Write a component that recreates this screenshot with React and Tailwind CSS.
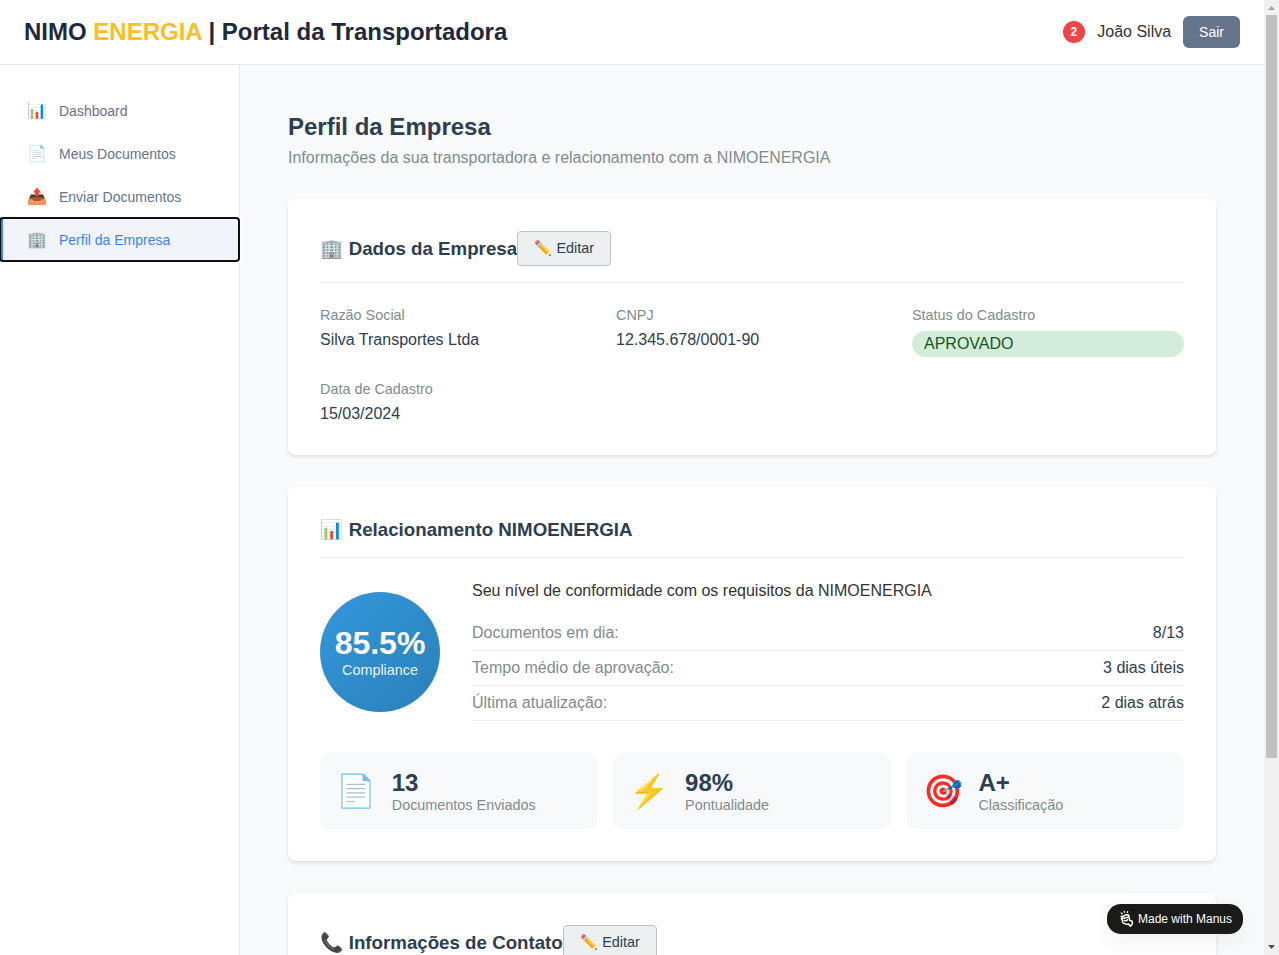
import React from "react";

const navItems = [
  { icon: "📊", label: "Dashboard" },
  { icon: "📄", label: "Meus Documentos" },
  { icon: "📤", label: "Enviar Documentos" },
  { icon: "🏢", label: "Perfil da Empresa", active: true },
];

const complianceRows = [
  ["Documentos em dia:", "8/13"],
  ["Tempo médio de aprovação:", "3 dias úteis"],
  ["Última atualização:", "2 dias atrás"],
];

const stats = [
  { icon: "📄", value: "13", label: "Documentos Enviados" },
  { icon: "⚡", value: "98%", label: "Pontualidade" },
  { icon: "🎯", value: "A+", label: "Classificação" },
];

function Header() {
  return (
    <header className="flex h-[65px] shrink-0 items-center justify-between border-b border-[#e2e8f0] bg-white px-6">
      <h1 className="text-2xl leading-7 font-bold text-[#1e293b]">
        NIMO <span className="text-[#fbbf24]">ENERGIA</span> | Portal da Transportadora
      </h1>
      <div className="flex items-center gap-3">
        <span className="flex h-[22px] w-[22px] items-center justify-center rounded-full bg-[#ef4444] pr-px text-xs font-bold text-white">
          2
        </span>
        <span>João Silva</span>
        <button className="h-8 rounded-md bg-[#64748b] px-4 text-sm text-white">Sair</button>
      </div>
    </header>
  );
}

function Sidebar() {
  return (
    <aside className="w-60 shrink-0 border-r border-[#e2e8f0] bg-white pt-6">
      <nav className="flex flex-col">
        {navItems.map((item) => (
          <button
            key={item.label}
            className={
              item.active
                ? "flex h-[43px] items-center gap-3 border-l-[3px] border-[#3b82f6] bg-[#f1f5f9] px-6 text-sm text-[#3b82f6] [outline:auto_1px_#101010]"
                : "flex h-[43px] items-center gap-3 border-l-[3px] border-transparent px-6 text-sm text-[#64748b]"
            }
          >
            <span className="w-5 text-center text-base leading-[normal]">{item.icon}</span>
            <span>{item.label}</span>
          </button>
        ))}
      </nav>
    </aside>
  );
}

function Card({ icon, title, editable, children }) {
  return (
    <section className="shrink-0 rounded-lg bg-white p-8 shadow-[0_2px_4px_rgba(0,0,0,0.1)]">
      <div className="mb-6 flex items-center border-b border-[#ecf0f1] pb-4">
        <h3 className="text-[18.72px] leading-[22px] font-bold text-[#2c3e50]">
          <span className="mr-[0.5px]">{icon}</span> {title}
        </h3>
        {editable && (
          <button className="h-[35px] rounded border border-[#bdc3c7] bg-[#ecf0f1] px-4 text-[14.4px] leading-[17px] text-[#2c3e50]">
            <span className="mr-[0.4px]">✏️</span> Editar
          </button>
        )}
      </div>
      {children}
    </section>
  );
}

function Field({ label, children }) {
  return (
    <div className="flex flex-col gap-2">
      <span className="text-[14.4px] leading-4 text-[#7f8c8d]">{label}</span>
      {children}
    </div>
  );
}

function Scrollbar() {
  return (
    <div className="flex w-[15px] shrink-0 flex-col items-center justify-between bg-[#f1f1f1]">
      <div className="flex flex-col items-center">
        <svg className="h-[15px] w-[15px]" viewBox="0 0 15 15">
          <path d="M4 10 L7.5 6 L11 10 Z" fill="#a3a3a3" />
        </svg>
        <div className="h-[743px] w-[11px] bg-[#c1c1c1]" />
      </div>
      <svg className="h-[15px] w-[15px]" viewBox="0 0 15 15">
        <path d="M4 5 L11 5 L7.5 9 Z" fill="#505050" />
      </svg>
    </div>
  );
}

function ManusBadge() {
  return (
    <div className="absolute top-[904px] left-[1107px] flex h-[30px] w-[136px] items-center gap-1 rounded-[14px] bg-[#1a1a19] pl-3 text-xs text-white shadow-[0_8px_24px_rgba(0,0,0,0.06)]">
      <svg className="h-[18px] w-[15px] shrink-0" viewBox="0 0 15 18" fill="none" stroke="white" strokeLinecap="round" strokeLinejoin="round">
        <path d="M2.2 2.9 L3.2 3.8 M5.3 1.3 L5.5 2.3 M8.7 1.5 L8.3 2.4" strokeWidth="1.2" />
        <path d="M2.2 6.4 L5 5.9 Q7 4.4 9.2 5 Q10.4 5.6 9.6 7 Q10.9 8.4 10.6 10.4 L13.2 11.2 L13.4 14 L11.4 16.2 L9.6 14 Q6.4 14.6 4.5 13.2 Q3 12 3.5 10.2 L2.3 8.6 L3.8 8 Z" strokeWidth="1.5" />
        <path d="M4.4 8.3 L8.6 7.2 M5.3 10.4 Q7.4 11.8 8.6 9.4" strokeWidth="1.4" />
      </svg>
      <span>Made with Manus</span>
    </div>
  );
}

export default function App() {
  return (
    <div className="relative flex h-[955px] w-[1279px] overflow-hidden bg-[#f8fafc] font-['Liberation_Sans',Arial,sans-serif] text-base leading-[18px] text-[#333]">
      <div className="flex min-w-0 flex-1 flex-col">
        <Header />
        <div className="flex min-h-0 flex-1">
          <Sidebar />
          <main className="flex min-w-0 flex-1 flex-col gap-8 overflow-hidden p-12">
            <div className="flex shrink-0 flex-col gap-2">
              <h2 className="text-2xl leading-7 font-bold text-[#2c3e50]">Perfil da Empresa</h2>
              <p className="text-[#7f8c8d]">
                Informações da sua transportadora e relacionamento com a NIMOENERGIA
              </p>
            </div>

            <Card icon="🏢" title="Dados da Empresa" editable>
              <div className="grid grid-cols-3 gap-6 text-[#2c3e50]">
                <Field label="Razão Social">
                  <span>Silva Transportes Ltda</span>
                </Field>
                <Field label="CNPJ">
                  <span>12.345.678/0001-90</span>
                </Field>
                <Field label="Status do Cadastro">
                  <span className="rounded-[20px] bg-[#d4edda] px-3 py-1 text-[#155724]">APROVADO</span>
                </Field>
                <Field label="Data de Cadastro">
                  <span>15/03/2024</span>
                </Field>
              </div>
            </Card>

            <Card icon="📊" title="Relacionamento NIMOENERGIA">
              <div className="mb-8 flex items-center gap-8">
                <div className="flex h-[120px] w-[120px] shrink-0 flex-col items-center justify-center rounded-full bg-[linear-gradient(135deg,#3498db,#2980b9)] text-white">
                  <span className="-mt-px text-[32px] leading-[37px] font-bold">85.5%</span>
                  <span className="text-[14.4px] leading-4 opacity-90">Compliance</span>
                </div>
                <div className="flex-1">
                  <p className="mb-4">Seu nível de conformidade com os requisitos da NIMOENERGIA</p>
                  {complianceRows.map(([label, value]) => (
                    <div key={label} className="flex justify-between border-b border-[#ecf0f1] py-2">
                      <span className="text-[#7f8c8d]">{label}</span>
                      <span className="text-[#2c3e50]">{value}</span>
                    </div>
                  ))}
                </div>
              </div>
              <div className="grid grid-cols-3 gap-4">
                {stats.map((stat) => (
                  <div key={stat.label} className="flex h-[76px] items-center gap-4 rounded-lg bg-[#f8f9fa] px-4">
                    <span className="w-[39.75px] text-[32px] leading-[38px]">{stat.icon}</span>
                    <div className="flex flex-col">
                      <span className="text-2xl leading-7 font-bold text-[#2c3e50]">{stat.value}</span>
                      <span className="text-[14.4px] leading-4 text-[#7f8c8d]">{stat.label}</span>
                    </div>
                  </div>
                ))}
              </div>
            </Card>

            <Card icon="📞" title="Informações de Contato" editable />
          </main>
        </div>
      </div>
      <Scrollbar />
      <ManusBadge />
    </div>
  );
}
